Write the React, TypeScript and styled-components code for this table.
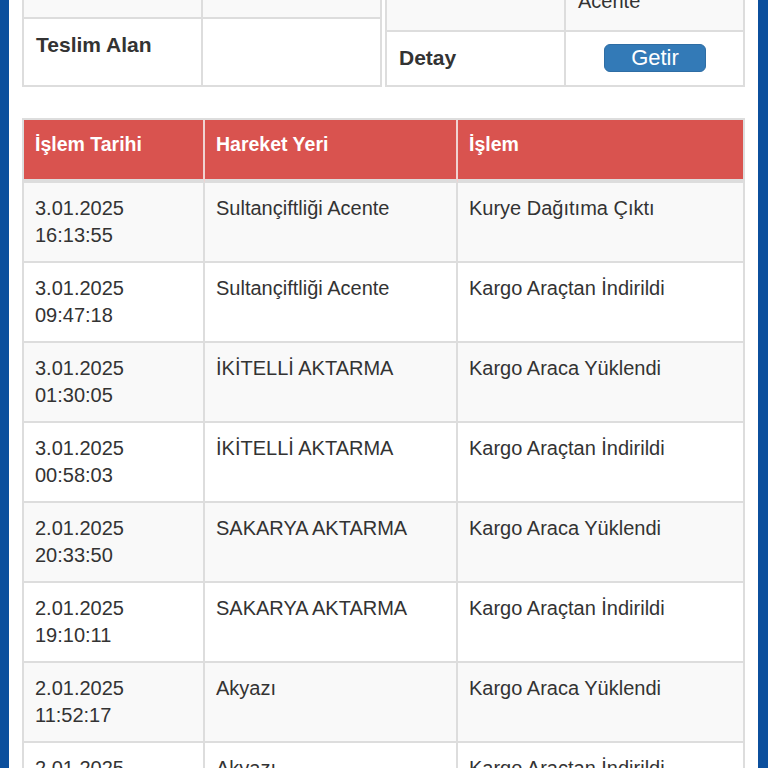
import React from "react";
import styled, { createGlobalStyle } from "styled-components";

const Global = createGlobalStyle`
  html, body { margin: 0; padding: 0; overflow: hidden; background: #fff; }
  body { font-family: "Liberation Sans", Arial, Helvetica, sans-serif; color: #333; }
  * { box-sizing: border-box; }
`;

const Frame = styled.div`
  display: flex;
  min-height: 100vh;
  background: #fff;
`;

const SideBar = styled.div<{ $w: number }>`
  flex: 0 0 ${(p) => p.$w}px;
  background: #0b4f9d;
`;

const Main = styled.main`
  flex: 1;
  min-width: 0;
  padding: 0 13px 40px;
  margin-top: -53px;
`;

const InfoGrid = styled.section`
  display: grid;
  grid-template-columns: 1fr 1fr;
  column-gap: 3px;
  align-items: start;
`;

const InfoTable = styled.div`
  display: grid;
  grid-template-columns: 1fr 1fr;
  border-top: 2px solid #ddd;
  border-left: 2px solid #ddd;
`;

const InfoCell = styled.div<{ $h: number; $alt?: boolean; $label?: boolean; $center?: boolean }>`
  height: ${(p) => p.$h}px;
  padding: 12px 11px 12px 12px;
  border-right: 2px solid #ddd;
  border-bottom: 2px solid #ddd;
  background: ${(p) => (p.$alt ? "#f9f9f9" : "#fff")};
  font-size: ${(p) => (p.$label ? "21px" : "20px")};
  font-weight: ${(p) => (p.$label ? 700 : 400)};
  line-height: 27px;
  text-align: ${(p) => (p.$center ? "center" : "left")};
  color: #333;
`;

const GetirButton = styled.button`
  display: block;
  margin: 0 auto;
  width: 102px;
  height: 28px;
  padding: 0;
  border: 1px solid #2e6da4;
  border-radius: 6px;
  background: #337ab7;
  color: #fff;
  font-family: "Liberation Sans", Arial, sans-serif;
  font-size: 22px;
  line-height: 26px;
`;

const MovesTable = styled.table`
  width: 100%;
  margin-top: 31px;
  table-layout: fixed;
  border-collapse: separate;
  border-spacing: 0;
  border-top: 2px solid #ddd;
  border-left: 2px solid #ddd;
  font-size: 20px;
  line-height: 27px;
`;

const HeadCell = styled.th`
  background: #d9534f;
  color: #fff;
  font-weight: 700;
  font-size: 19.5px;
  text-align: left;
  vertical-align: top;
  padding: 11px 11px 21px;
  border-right: 2px solid #f0d3d1;
  border-bottom: 4px solid #ddd;
  &:last-child { border-right-color: #ddd; }
`;

const Row = styled.tr<{ $alt: boolean }>`
  background: ${(p) => (p.$alt ? "#f9f9f9" : "#fff")};
`;

const Cell = styled.td`
  padding: 12px 11px;
  vertical-align: top;
  color: #333;
  border-right: 2px solid #ddd;
  border-bottom: 2px solid #ddd;
`;

type Move = { date: string; time: string; place: string; action: string };

const moves: Move[] = [
  { date: "3.01.2025", time: "16:13:55", place: "Sultançiftliği Acente", action: "Kurye Dağıtıma Çıktı" },
  { date: "3.01.2025", time: "09:47:18", place: "Sultançiftliği Acente", action: "Kargo Araçtan İndirildi" },
  { date: "3.01.2025", time: "01:30:05", place: "İKİTELLİ AKTARMA", action: "Kargo Araca Yüklendi" },
  { date: "3.01.2025", time: "00:58:03", place: "İKİTELLİ AKTARMA", action: "Kargo Araçtan İndirildi" },
  { date: "2.01.2025", time: "20:33:50", place: "SAKARYA AKTARMA", action: "Kargo Araca Yüklendi" },
  { date: "2.01.2025", time: "19:10:11", place: "SAKARYA AKTARMA", action: "Kargo Araçtan İndirildi" },
  { date: "2.01.2025", time: "11:52:17", place: "Akyazı", action: "Kargo Araca Yüklendi" },
  { date: "2.01.2025", time: "10:41:26", place: "Akyazı", action: "Kargo Araçtan İndirildi" },
];

export default function App() {
  return (
    <>
      <Global />
      <Frame>
        <SideBar $w={9} />
        <Main>
          <InfoGrid>
            <InfoTable>
              <InfoCell $h={70} $alt $label />
              <InfoCell $h={70} $alt />
              <InfoCell $h={68} $label>Teslim Alan</InfoCell>
              <InfoCell $h={68} />
            </InfoTable>
            <InfoTable>
              <InfoCell $h={83} $alt $label />
              <InfoCell $h={83} $alt>Sultançiftliği Acente</InfoCell>
              <InfoCell $h={55} $label>Detay</InfoCell>
              <InfoCell $h={55} $center>
                <GetirButton type="button">Getir</GetirButton>
              </InfoCell>
            </InfoTable>
          </InfoGrid>

          <MovesTable>
            <colgroup>
              <col style={{ width: 181 }} />
              <col style={{ width: 253 }} />
              <col style={{ width: 287 }} />
            </colgroup>
            <thead>
              <tr>
                <HeadCell>İşlem Tarihi</HeadCell>
                <HeadCell>Hareket Yeri</HeadCell>
                <HeadCell>İşlem</HeadCell>
              </tr>
            </thead>
            <tbody>
              {moves.map((m, i) => (
                <Row key={i} $alt={i % 2 === 0}>
                  <Cell>
                    {m.date}
                    <br />
                    {m.time}
                  </Cell>
                  <Cell>{m.place}</Cell>
                  <Cell>{m.action}</Cell>
                </Row>
              ))}
            </tbody>
          </MovesTable>
        </Main>
        <SideBar $w={10} />
      </Frame>
    </>
  );
}
